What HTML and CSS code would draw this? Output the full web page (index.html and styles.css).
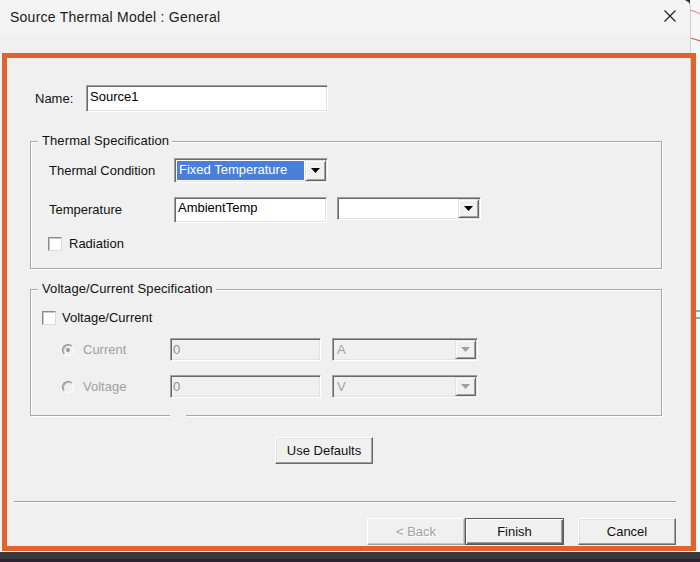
FILE: index.html
```html
<!DOCTYPE html>
<html>
<head>
<meta charset="utf-8">
<link rel="stylesheet" href="styles.css">
</head>
<body>
<div class="desktop">
  <div class="top">
    <div class="window">
      <div class="titlebar">
        <span class="title">Source Thermal Model : General</span>
        <svg class="close" width="12" height="12" viewBox="0 0 12 12"><path d="M0.5 0.5 L11.5 11.5 M11.5 0.5 L0.5 11.5" stroke="#1a1a1a" stroke-width="1.1" fill="none"/></svg>
      </div>
      <div class="client">
        <div class="name-row">
          <span class="lbl name-lbl">Name:</span>
          <div class="edit name-edit">Source1</div>
        </div>

        <div class="group g1">
          <div class="legend">Thermal Specification</div>
          <div class="row tc-row">
            <span class="lbl col-lbl">Thermal Condition</span>
            <div class="combo c-cond">
              <span class="sel">Fixed Temperature</span>
              <span class="dd"><svg width="9" height="5" viewBox="0 0 9 5"><polygon points="0,0 9,0 4.5,5" fill="#000"/></svg></span>
            </div>
          </div>
          <div class="row temp-row">
            <span class="lbl col-lbl">Temperature</span>
            <div class="edit temp-edit">AmbientTemp</div>
            <div class="combo c-unit">
              <span class="val"></span>
              <span class="dd"><svg width="9" height="5" viewBox="0 0 9 5"><polygon points="0,0 9,0 4.5,5" fill="#000"/></svg></span>
            </div>
          </div>
          <div class="row rad-row">
            <span class="check"></span>
            <span class="lbl">Radiation</span>
          </div>
        </div>

        <div class="group g2">
          <div class="legend">Voltage/Current Specification</div>
          <div class="row vc-row">
            <span class="check"></span>
            <span class="lbl">Voltage/Current</span>
          </div>
          <div class="row src-row first">
            <div class="radio-cell"><span class="radio on"></span><span class="lbl dis">Current</span></div>
            <div class="edit dis-edit">0</div>
            <div class="combo dis-combo">
              <span class="val">A</span>
              <span class="dd"><svg width="9" height="5" viewBox="0 0 9 5"><polygon points="0,0 9,0 4.5,5" fill="#a0a0a0"/></svg></span>
            </div>
          </div>
          <div class="row src-row second">
            <div class="radio-cell"><span class="radio"></span><span class="lbl dis">Voltage</span></div>
            <div class="edit dis-edit">0</div>
            <div class="combo dis-combo">
              <span class="val">V</span>
              <span class="dd"><svg width="9" height="5" viewBox="0 0 9 5"><polygon points="0,0 9,0 4.5,5" fill="#a0a0a0"/></svg></span>
            </div>
          </div>
        </div>

        <div class="defaults-row">
          <button class="btn">Use Defaults</button>
        </div>

        <div class="separator"></div>

        <div class="footer">
          <button class="btn btn-dis">&lt; Back</button>
          <button class="btn btn-default">Finish</button>
          <button class="btn btn-cancel">Cancel</button>
        </div>
      </div>
    </div>
    <div class="strip">
      <svg width="10" height="552" viewBox="0 0 10 552">
        <path d="M0 10 Q5 11 10 14" stroke="#e07a7a" stroke-width="1" fill="none"/>
        <path d="M0 38 Q5 39 10 41" stroke="#e04040" stroke-width="1" fill="none"/>
        <path d="M1 311 H10 M1 318 H10" stroke="#555" stroke-width="1"/>
        <rect x="0" y="336" width="4" height="22" fill="#bcbcbc"/>
      </svg>
    </div>
  </div>
  <div class="bottombar"></div>
  <div class="highlight"></div>
</div>
</body>
</html>
```

FILE: styles.css
```css
body {
  margin: 0;
  background: #2b2a31;
  font-family: "Liberation Sans", Arial, sans-serif;
  font-size: 13px;
  color: #000;
}

.desktop {
  position: relative;
  width: 700px;
  height: 562px;
  overflow: hidden;
  display: flex;
  flex-direction: column;
}

.top {
  display: flex;
  height: 552px;
}

.window {
  width: 690px;
  height: 552px;
  background: #f0f0f0;
  border-top-right-radius: 8px;
  display: flex;
  flex-direction: column;
  box-shadow: 1px 0 0 #cfcfcf;
  position: relative;
  z-index: 1;
}

.titlebar {
  height: 33px;
  flex: none;
  background: #f3f3f3;
  border-top-right-radius: 8px;
  display: flex;
  align-items: center;
  justify-content: space-between;
  padding: 0 14px 1px 10px;
}

.title {
  font-size: 14px;
  color: #1b1b1b;
  letter-spacing: 0.25px;
}

.close {
  display: block;
  margin-top: -1px;
}

.client {
  display: flex;
  flex-direction: column;
  flex: 1;
}

.lbl {
  line-height: 16px;
  white-space: nowrap;
  color: #111;
}

.name-row {
  display: flex;
  align-items: center;
  margin-top: 51px;
  padding-left: 35px;
}

.name-lbl {
  width: 51px;
}

.edit {
  box-sizing: border-box;
  background: #fff;
  border: 1px solid;
  border-color: #a0a0a0 #fff #fff #a0a0a0;
  box-shadow: inset 1px 1px 0 #696969, inset -1px -1px 0 #e3e3e3;
  padding: 3px 3px 0 3px;
  line-height: 16px;
  white-space: nowrap;
}

.name-edit {
  width: 242px;
  height: 27px;
}

.group {
  box-sizing: border-box;
  margin-left: 30px;
  width: 632px;
  border: 1px solid #a8a8a8;
  box-shadow: 1px 1px 0 #fff, inset 1px 1px 0 #fff;
  position: relative;
}

.g1 {
  margin-top: 29px;
  height: 128px;
}

.g2 {
  margin-top: 20px;
  height: 127px;
}

.g2::after {
  content: "";
  position: absolute;
  left: 139px;
  bottom: -2px;
  width: 16px;
  height: 3px;
  background: #f0f0f0;
}

.legend {
  width: max-content;
  margin: -9px 0 0 7px;
  padding: 0 3px 0 4px;
  background: #f0f0f0;
  line-height: 16px;
  color: #111;
  letter-spacing: 0.1px;
}

.row {
  display: flex;
  align-items: center;
}

.col-lbl {
  width: 125px;
}

.tc-row {
  margin-top: 9px;
  padding-left: 18px;
}

.combo {
  box-sizing: border-box;
  display: flex;
  background: #fff;
  border: 1px solid;
  border-color: #a0a0a0 #fff #fff #a0a0a0;
  box-shadow: inset 1px 1px 0 #696969, inset -1px -1px 0 #e3e3e3;
  padding: 2px;
}

.c-cond {
  width: 154px;
  height: 25px;
}

.sel {
  flex: 1;
  background: #4a7fd8;
  color: #fff;
  line-height: 18px;
  padding-left: 2px;
  white-space: nowrap;
  margin-right: 1px;
}

.val {
  flex: 1;
  padding-left: 1px;
  line-height: 17px;
  white-space: nowrap;
}

.dd {
  box-sizing: border-box;
  width: 21px;
  background: #f0f0f0;
  border: 1px solid;
  border-color: #e3e3e3 #696969 #696969 #e3e3e3;
  box-shadow: inset 1px 1px 0 #fff, inset -1px -1px 0 #a0a0a0;
  display: flex;
  align-items: center;
  justify-content: center;
  margin: -1px -1px -1px 0;
}

.dd svg {
  display: block;
}

.temp-row {
  margin-top: 14px;
  padding-left: 18px;
  align-items: flex-start;
}

.temp-row .col-lbl {
  margin-top: 5px;
}

.temp-edit {
  width: 153px;
  height: 26px;
  padding-top: 2px;
}

.c-unit {
  width: 144px;
  height: 23px;
  margin-left: 10px;
}

.rad-row {
  margin-top: 13px;
  padding-left: 17px;
}

.check {
  box-sizing: border-box;
  width: 14px;
  height: 14px;
  background: #fff;
  border: 1px solid;
  border-color: #8a8a8a #dcdcdc #dcdcdc #8a8a8a;
  box-shadow: inset 1px 1px 0 #c8c8c8;
  margin-right: 7px;
  flex: none;
}

.vc-row {
  margin-top: 13px;
  padding-left: 11px;
}

.vc-row .check {
  margin-right: 6px;
}

.src-row {
  padding-left: 31px;
}

.src-row.first {
  margin-top: 12px;
}

.src-row.second {
  margin-top: 14px;
}

.radio-cell {
  width: 108px;
  display: flex;
  align-items: center;
}

.radio {
  box-sizing: border-box;
  width: 12px;
  height: 12px;
  border-radius: 50%;
  border: 1px solid;
  border-color: #8a8a8a #fff #fff #8a8a8a;
  box-shadow: inset 1px 1px 0 #b8b8b8;
  background: #f0f0f0;
  margin-right: 9px;
  display: flex;
  align-items: center;
  justify-content: center;
  flex: none;
}

.radio.on::after {
  content: "";
  width: 4px;
  height: 4px;
  border-radius: 50%;
  background: #999;
}

.dis {
  color: #a0a0a0;
}

.dis-edit {
  width: 151px;
  height: 23px;
  background: #f0f0f0;
  color: #909090;
  padding: 0 0 0 2px;
  display: flex;
  align-items: center;
}

.dis-combo {
  width: 146px;
  height: 23px;
  margin-left: 11px;
  background: #f0f0f0;
  color: #a0a0a0;
  align-items: stretch;
}

.dis-combo .val {
  display: flex;
  align-items: center;
  padding-left: 2px;
}

.btn {
  box-sizing: border-box;
  width: 98px;
  height: 27px;
  background: #f0f0f0;
  border: 1px solid;
  border-color: #fff #696969 #696969 #fff;
  box-shadow: inset -1px -1px 0 #a0a0a0, inset 1px 1px 0 #e3e3e3;
  font-family: "Liberation Sans", Arial, sans-serif;
  font-size: 13px;
  color: #111;
  padding: 0;
  margin: 0;
  display: flex;
  align-items: center;
  justify-content: center;
}

.defaults-row {
  margin-top: 21px;
  padding-left: 275px;
}

.separator {
  margin: 37px 14px 0 14px;
  height: 1px;
  background: #a0a0a0;
  border-bottom: 1px solid #fff;
}

.footer {
  display: flex;
  justify-content: flex-end;
  margin-top: 15px;
  padding-right: 14px;
}

.btn-dis {
  color: #a0a0a0;
  text-shadow: 1px 1px 0 #fff;
  border-color: #fff #a0a0a0 #a0a0a0 #fff;
  box-shadow: inset -1px -1px 0 #c8c8c8;
}

.btn-default {
  width: 99px;
  border: 1px solid #5a5a5a;
  box-shadow: inset 1px 1px 0 #fff, inset -1px -1px 0 #696969, inset -2px -2px 0 #a0a0a0;
}

.btn-cancel {
  margin-left: 14px;
}

.strip {
  flex: 1;
  background: #f7f7f7;
}

.strip svg {
  display: block;
}

.bottombar {
  height: 10px;
  background: linear-gradient(#38383e 0 7px, #2b2430 7px);
}

.highlight {
  position: absolute;
  left: 2px;
  top: 53px;
  width: 694px;
  height: 498px;
  box-sizing: border-box;
  border: 5px solid #e0622c;
  z-index: 2;
  pointer-events: none;
}
```
